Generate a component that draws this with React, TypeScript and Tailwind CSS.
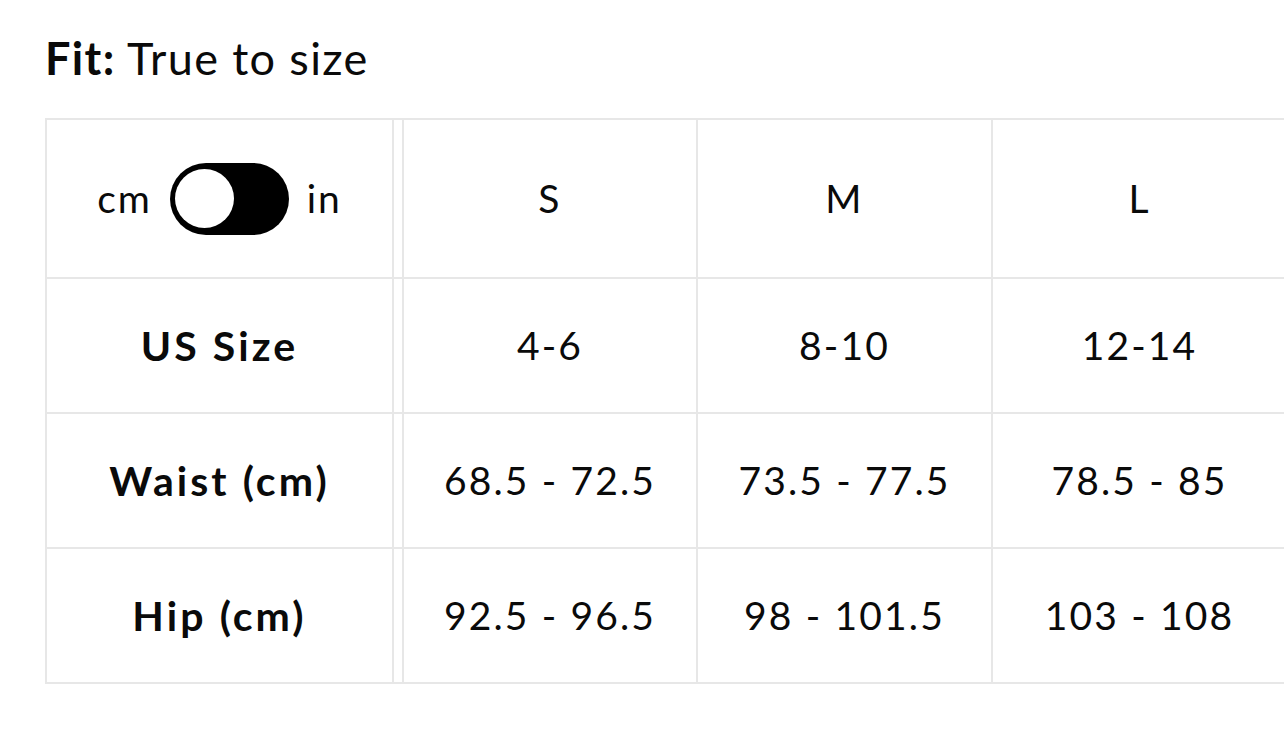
import { useState } from "react";

const sizes = ["S", "M", "L"];
const colWidths = ["w-[294px]", "w-[295px]", "w-[295px]"];

const rows = [
  { label: "US Size", values: ["4-6", "8-10", "12-14"] },
  { label: "Waist (cm)", values: ["68.5 - 72.5", "73.5 - 77.5", "78.5 - 85"] },
  { label: "Hip (cm)", values: ["92.5 - 96.5", "98 - 101.5", "103 - 108"] },
];

function UnitToggle() {
  const [inches, setInches] = useState(false);
  return (
    <div className="flex items-center gap-[18px] text-[39px] tracking-[0.05em] text-[#0a0a0a]">
      <span>cm</span>
      <button
        onClick={() => setInches(!inches)}
        className={`flex h-[72px] w-[119px] items-center rounded-full bg-black px-[5px] ${
          inches ? "justify-end" : "justify-start"
        }`}
      >
        <span className="block h-[59px] w-[59px] rounded-full bg-white" />
      </button>
      <span>in</span>
    </div>
  );
}

function Row({
  first,
  cells,
  height,
  top,
}: {
  first: React.ReactNode;
  cells: React.ReactNode[];
  height: string;
  top?: boolean;
}) {
  return (
    <div
      className={`flex border-b-2 border-[#e7e7e7] ${top ? "border-t-2" : ""} ${height}`}
    >
      <div className="flex w-[349px] shrink-0 items-center justify-center border-x-2 border-[#e7e7e7]">
        {first}
      </div>
      <div className="w-[8px] shrink-0" />
      {cells.map((c, i) => (
        <div
          key={i}
          className={`flex ${colWidths[i]} shrink-0 items-center justify-center border-l-2 border-[#e7e7e7] text-[39px] tracking-[0.055em] text-[#0a0a0a]`}
        >
          {c}
        </div>
      ))}
      <div className="w-[2px] shrink-0 bg-[#e7e7e7]" />
    </div>
  );
}

export default function App() {
  return (
    <div
      className="h-[744px] w-[1284px] overflow-hidden bg-white pl-[45px] pt-[28px]"
      style={{ fontFamily: "Lato, 'Noto Sans', sans-serif" }}
    >
      <h3 className="text-[45px] leading-[60px] tracking-[0.03em] text-[#0a0a0a]">
        <span className="font-bold">Fit:</span> True to size
      </h3>
      <div className="mt-[30px] w-[1300px]">
        <Row top height="h-[161px]" first={<UnitToggle />} cells={sizes} />
        {rows.map((r) => (
          <Row
            key={r.label}
            height="h-[135px]"
            first={
              <span className="text-[41px] font-bold tracking-[0.075em] text-[#0a0a0a]">
                {r.label}
              </span>
            }
            cells={r.values}
          />
        ))}
      </div>
    </div>
  );
}
